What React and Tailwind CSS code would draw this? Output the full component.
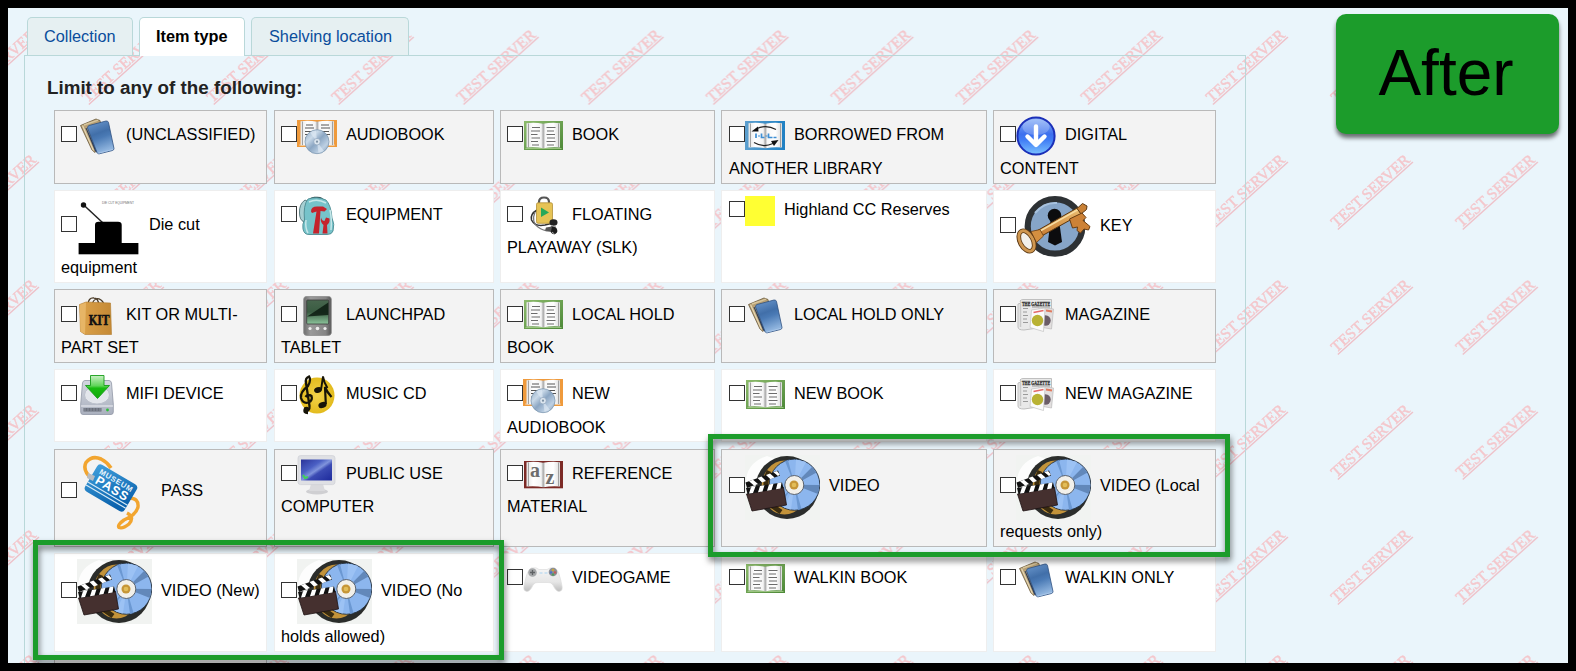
import React from "react";

const Svg = ({ w = 40, h = 40, className = "mt-1", children }) => (
  <svg width={w} height={h} viewBox={`0 0 ${w} ${h}`} className={`shrink-0 ${className}`} aria-hidden="true">
    {children}
  </svg>
);

const Defs = () => (
  <svg width="0" height="0" className="absolute">
    <defs>
      <linearGradient id="blueBook" x1="0" y1="0" x2="0.3" y2="1">
        <stop offset="0" stopColor="#6f9bd0" />
        <stop offset="0.45" stopColor="#416fa9" />
        <stop offset="0.6" stopColor="#4a7ab5" />
        <stop offset="1" stopColor="#8fb4de" />
      </linearGradient>
      <linearGradient id="page" x1="0" y1="0" x2="1" y2="0">
        <stop offset="0" stopColor="#e4e4e4" />
        <stop offset="0.2" stopColor="#ffffff" />
        <stop offset="0.44" stopColor="#f4f4f4" />
        <stop offset="0.5" stopColor="#a8a8a8" />
        <stop offset="0.56" stopColor="#f8f8f8" />
        <stop offset="0.8" stopColor="#ffffff" />
        <stop offset="1" stopColor="#dcdcdc" />
      </linearGradient>
      <linearGradient id="disc" x1="0" y1="0" x2="1" y2="1">
        <stop offset="0" stopColor="#8fa9c4" />
        <stop offset="0.3" stopColor="#c9d9e8" />
        <stop offset="0.5" stopColor="#8ba6c3" />
        <stop offset="0.75" stopColor="#bdd0e3" />
        <stop offset="1" stopColor="#7c96b2" />
      </linearGradient>
      <linearGradient id="orb" x1="0" y1="0" x2="0" y2="1">
        <stop offset="0" stopColor="#8fb6f7" />
        <stop offset="0.45" stopColor="#3d6fee" />
        <stop offset="0.6" stopColor="#3f7bf5" />
        <stop offset="1" stopColor="#7cc4ff" />
      </linearGradient>
      <linearGradient id="greenFrame" x1="0" y1="0" x2="1" y2="1">
        <stop offset="0" stopColor="#8dbb6c" />
        <stop offset="1" stopColor="#4c8837" />
      </linearGradient>
      <linearGradient id="blueFrame" x1="0" y1="0" x2="1" y2="0">
        <stop offset="0" stopColor="#5d9fce" />
        <stop offset="1" stopColor="#1f80c3" />
      </linearGradient>
      <linearGradient id="bag" x1="0" y1="0" x2="1" y2="0">
        <stop offset="0" stopColor="#dca24a" />
        <stop offset="1" stopColor="#c58a35" />
      </linearGradient>
      <linearGradient id="pda" x1="0" y1="0" x2="1" y2="0">
        <stop offset="0" stopColor="#6d6d6d" />
        <stop offset="0.25" stopColor="#9a9a9a" />
        <stop offset="0.8" stopColor="#858585" />
        <stop offset="1" stopColor="#555" />
      </linearGradient>
      <linearGradient id="pdaScreen" x1="0" y1="0" x2="0" y2="1">
        <stop offset="0" stopColor="#48664e" />
        <stop offset="0.5" stopColor="#3a5c42" />
        <stop offset="1" stopColor="#8cc49b" />
      </linearGradient>
      <linearGradient id="arrowGreen" x1="0" y1="0" x2="0" y2="1">
        <stop offset="0" stopColor="#c9f0c4" />
        <stop offset="0.45" stopColor="#5fd558" />
        <stop offset="0.55" stopColor="#18bc10" />
        <stop offset="1" stopColor="#12a80c" />
      </linearGradient>
      <linearGradient id="drive" x1="0" y1="0" x2="0" y2="1">
        <stop offset="0" stopColor="#d3d7e0" />
        <stop offset="1" stopColor="#aab0be" />
      </linearGradient>
      <linearGradient id="screenBlue" x1="0" y1="0" x2="1" y2="1">
        <stop offset="0" stopColor="#2a3398" />
        <stop offset="0.35" stopColor="#4a5fc4" />
        <stop offset="0.5" stopColor="#8094dc" />
        <stop offset="0.6" stopColor="#3c4cb4" />
        <stop offset="1" stopColor="#1d2a9c" />
      </linearGradient>
      <linearGradient id="passCard" x1="0" y1="0" x2="1" y2="0.6">
        <stop offset="0" stopColor="#41a0dc" />
        <stop offset="1" stopColor="#0a62ad" />
      </linearGradient>
      <linearGradient id="pad" x1="0" y1="0" x2="0" y2="1">
        <stop offset="0" stopColor="#f6f6f6" />
        <stop offset="0.6" stopColor="#e6e6e6" />
        <stop offset="1" stopColor="#bdbdbd" />
      </linearGradient>
      <linearGradient id="brass" x1="0" y1="0" x2="0" y2="1">
        <stop offset="0" stopColor="#eec276" />
        <stop offset="1" stopColor="#c4762c" />
      </linearGradient>
      <radialGradient id="gold">
        <stop offset="0" stopColor="#f2d34a" />
        <stop offset="1" stopColor="#e3bb1d" />
      </radialGradient>
    </defs>
  </svg>
);

const Pages = ({ y = 0 }) => (
  <g transform={`translate(0 ${y})`}>
    <path d="M3.500 7.200 Q12 6 20 7.800 Q29 6 37 7.200 V31.500 Q29 30.500 20.500 32.300 Q12 30.500 3.500 31.500Z" fill="url(#page)" />
    <path d="M5.500 7.500V31M35.500 7.500V31" stroke="#8f8f8f" strokeWidth="0.800" />
  </g>
);

const PageLines = () => (
  <path
    d="M9 11.500h8M8 15h9M8 18.500h6.500M8.500 22h8.500M8 25.500h7M9 29h7M23.500 11.500h9M24 15h7M23.500 18.500h8.500M24 22h8M23.500 25.500h9M24 29h7"
    stroke="#6b6b6b"
    strokeWidth="1.100"
    fill="none"
  />
);

const BookIcon = ({ className }) => (
  <Svg className={className}>
    <rect x="1" y="5" width="39" height="29" fill="url(#greenFrame)" />
    <rect x="2.500" y="32.200" width="36" height="0.800" fill="#a9cf8e" />
    <Pages />
    <PageLines />
  </Svg>
);

const AudiobookIcon = () => (
  <Svg>
    <rect x="0" y="4" width="40" height="27" fill="#ef9a3c" />
    <rect x="2" y="28.500" width="36" height="1.200" fill="#f6c083" />
    <Pages y={-2} />
    <path d="M9 9h7M8 12h9M8 15.500h7M8 18.500h5M24 9h8M24 12h9M24 15.500h8M28 18.500h5M8 22h3" stroke="#555" strokeWidth="1.100" />
    <circle cx="20" cy="25.700" r="12" fill="url(#disc)" stroke="#7690ab" strokeWidth="0.700" />
    <path d="M20 25.700 L13 16.500 A12 12 0 0 1 19 14.500Z M20 25.700 L27 35 A12 12 0 0 1 21.500 37Z" fill="#e3edf6" opacity="0.600" />
    <circle cx="20" cy="25.700" r="3.300" fill="#dbe5ee" stroke="#8fa5bb" strokeWidth="0.700" />
    <circle cx="20" cy="25.700" r="1.100" fill="#7d90a4" />
  </Svg>
);

const LoanIcon = () => (
  <Svg>
    <rect x="0" y="5" width="40" height="29" fill="url(#blueFrame)" />
    <Pages />
    <path d="M31 13.500 Q21 8 11 13" stroke="#222" strokeWidth="1.200" fill="none" />
    <path d="M6.500 15.500 L13 10.500 L13.500 15.500Z" fill="#111" />
    <path d="M9 26.500 Q18 32 28 27.500" stroke="#222" strokeWidth="1.200" fill="none" />
    <path d="M33.500 24 L26 25 L29 30Z" fill="#111" />
    <path d="M11 17.500v4.500M16.500 17.500v4h3M23.500 17.500v4h4M28.500 21.500h3" stroke="#3f8fd4" strokeWidth="1.700" fill="none" />
    <path d="M13 20h2M20.500 20h2" stroke="#3f8fd4" strokeWidth="1.200" />
  </Svg>
);

const BooksIcon = ({ className }) => (
  <Svg className={className}>
    <path d="M3.500 9.500 L19 3 L23 4.500 L27 25 L18 36.500 L15 34Z" fill="#b79f74" stroke="#6b5a3c" strokeWidth="0.800" />
    <path d="M5.500 9.500 L16.500 34.500" stroke="#e6d8b5" strokeWidth="1.200" />
    <path d="M7 9 L21 4.200" stroke="#d8c69d" strokeWidth="1.400" />
    <path d="M9.500 12 L21 37.500 L18 35 L8.500 12Z" fill="#2c3c58" />
    <path d="M12 9.500 L29 5 Q31 4.700 31.500 6.500 L37 32.500 Q37 34 35.500 34.500 L21.500 38 L20 36.500 L10.500 12 Q10.500 10 12 9.500Z" fill="url(#blueBook)" stroke="#2f5080" strokeWidth="0.800" />
    <path d="M21.500 37.200 L36 33.300" stroke="#a9c6e8" strokeWidth="1" />
  </Svg>
);

const DownloadIcon = () => (
  <Svg>
    <circle cx="20" cy="20" r="18.600" fill="url(#orb)" stroke="#1b2fb8" strokeWidth="2" />
    <ellipse cx="20" cy="11" rx="13.500" ry="8" fill="#fff" opacity="0.220" />
    <path d="M20 10.500 V27 M11.500 20.500 L20 29 L28.500 20.500" stroke="#fff" strokeWidth="4.400" fill="none" strokeLinecap="round" strokeLinejoin="round" />
  </Svg>
);

const DieCutIcon = () => (
  <Svg w={63} h={62}>
    <text x="25" y="9" fontSize="3.300" textLength="32" fill="#777" fontFamily="Liberation Sans, sans-serif">DIE CUT EQUIPMENT</text>
    <path d="M6.700 10 L26 28" stroke="#222" strokeWidth="1.500" />
    <circle cx="6.500" cy="10" r="2.700" fill="#111" />
    <path d="M18 49 V30 Q18 26.700 21.500 26.700 H41 Q44.700 26.700 44.700 30 V49Z" fill="#000" />
    <rect x="1.600" y="48" width="59.800" height="11.300" fill="#000" />
  </Svg>
);

const BackpackIcon = () => (
  <Svg>
    <path d="M11 7 Q13 0.500 19 1.500 Q26 1 27 6" fill="none" stroke="#31494d" strokeWidth="1.300" />
    <path d="M8 4 Q2 8 2.500 17 Q2.500 24 7 26 L12 6Z" fill="#a6cfd2" stroke="#4f7175" strokeWidth="0.900" />
    <path d="M11 3 Q20 0 29 4 Q34 9 35 22 Q38 28 36 35 Q35 38.500 30 38.500 H12 Q7 38.500 6 33 Q5 28 7.500 24 Q6 9 11 3Z" fill="#76c3ca" stroke="#4d8b92" strokeWidth="0.900" />
    <path d="M12 6 Q20 2 29 7 M9 24 Q8 32 11 37 M33 14 Q35 22 34 34" stroke="#c6e7e9" strokeWidth="1.500" fill="none" />
    <path d="M14 15.500 Q14 10.500 20 10.500 H26 L30 13 L27.500 15.500 L23.500 15 L22 37.500 H16 L19.500 15.500 L15 17Z" fill="#c4232c" />
    <path d="M24 21.500 Q25 25 27.500 25 L29 21.500 L32.500 22.500 Q33 27 30 29 L30.500 37.500 H25.500 L26.500 29 Q23 26 24 21.500Z" fill="#c4232c" />
  </Svg>
);

const PlayawayIcon = () => (
  <Svg>
    <path d="M16 9 V6 Q16 1.500 21 1.500 Q26 1.500 26 6 V9" fill="none" stroke="#555" strokeWidth="2.200" />
    <path d="M14 14 Q7 18 8.500 24 Q12 31 22 29 L30 27" fill="none" stroke="#333" strokeWidth="1.500" />
    <path d="M12 16 Q8 26 15 31 Q20 35 27 35" fill="none" stroke="#777" strokeWidth="1.300" />
    <rect x="13.500" y="6.800" width="16" height="20.500" rx="1.500" fill="#e6c355" stroke="#b3913a" strokeWidth="0.800" />
    <path d="M18 11.500 L26 16.500 L18 21Z" fill="#27a85a" />
    <ellipse cx="30.500" cy="26.500" rx="4" ry="3.200" fill="#222" />
    <ellipse cx="30.500" cy="34" rx="3.500" ry="4.200" fill="#1c1c1c" transform="rotate(-30 30.500 34)" />
    <path d="M23 31.500 L29 30.500 L28 35.500 L22 34.500Z" fill="#555" />
    <path d="M28 29.500 L33 31 M29 36 L31.500 38" stroke="#aaa" strokeWidth="1" />
  </Svg>
);

const YellowIcon = () => <span className="mt-1 size-[30px] shrink-0 bg-[#ffff33]" />;

const KeyIcon = () => (
  <Svg w={75} h={61} className="mt-[3px]">
    <circle cx="39" cy="30.400" r="27.300" fill="#86a5c8" stroke="#2d3134" strokeWidth="6.200" />
    <path d="M19 17 Q28 6 41 7" stroke="#a7c2df" strokeWidth="2" fill="none" />
    <circle cx="38.500" cy="19.500" r="6.800" fill="#0c0c0e" />
    <path d="M34.500 24 H43 L46 46 L39 49.500 L32 46Z" fill="#0c0c0e" />
    <path d="M18 36.500 L62 11.500 L65 18 L22 42 Z" fill="url(#brass)" stroke="#5a3712" strokeWidth="1" />
    <path d="M20.500 37 L62 13.600" stroke="#f7dda3" strokeWidth="1.500" />
    <path d="M61 12.500 L66.500 7.500 L71 10 L70.500 13.500 L65 18Z" fill="#c98136" stroke="#5a3712" strokeWidth="1" />
    <path d="M53.500 23 L66 17 L70 21.500 L67 24.500 L74 30.500 L72.500 34 L68 33 L64.500 37 L61 34.500 L61.500 31 L56.500 32Z" fill="#cd8237" stroke="#6b3e12" strokeWidth="1" />
    <ellipse cx="10.500" cy="45" rx="6.500" ry="11" transform="rotate(-28 10.500 45)" fill="#f2f0ea" stroke="#5a3712" strokeWidth="4.600" />
    <ellipse cx="10.500" cy="45" rx="6.500" ry="11" transform="rotate(-28 10.500 45)" fill="none" stroke="#cf9750" strokeWidth="2.900" />
    <path d="M15 35.500 L24 33.500 L27.500 40 L20.500 46.500 Z" fill="#d48f40" stroke="#6b3e12" strokeWidth="0.800" />
  </Svg>
);

const KitIcon = () => (
  <Svg>
    <path d="M11 9 Q11 1.500 17 2 Q21 2 22 9 M15 8 Q18 0 24 4 Q27 6 26.500 9" fill="none" stroke="#4a3b27" strokeWidth="1.300" />
    <path d="M2.500 8.500 L9 6 L33.500 7 L34.500 38.500 H8 L3.500 35.500Z" fill="url(#bag)" stroke="#b07a2e" strokeWidth="0.600" />
    <path d="M9 6.500 L8 38 L3.500 35.500 L2.700 8.700Z" fill="#e7b566" />
    <text x="11.500" y="29" fontSize="12" textLength="21" lengthAdjust="spacingAndGlyphs" fontWeight="700" fill="#111" stroke="#111" strokeWidth="0.400" fontFamily="DejaVu Serif, serif">KIT</text>
  </Svg>
);

const PdaIcon = () => (
  <Svg>
    <path d="M9 0.500 H32 Q34 0.500 34.300 3 V37 Q34 39.500 31 39.500 H10 Q7 39.500 6.700 37 V3 Q7 0.500 9 0.500Z" fill="url(#pda)" stroke="#8e8e8e" strokeWidth="0.800" />
    <rect x="9.700" y="4" width="22" height="24" rx="1" fill="url(#pdaScreen)" stroke="#3b3b3b" strokeWidth="0.800" />
    <path d="M10 20.500 L17 16 L31.300 6.500 V19 L10 20.500Z" fill="#0d1c12" opacity="0.850" />
    <circle cx="13" cy="32.500" r="1.600" fill="#eee" />
    <circle cx="20.500" cy="32.500" r="1.800" fill="#eee" />
    <circle cx="28" cy="32.500" r="1.600" fill="#eee" />
  </Svg>
);

const MagazineIcon = () => (
  <Svg>
    <path d="M4 5 Q5 3.500 7 3.500 H35.500 V30 L8 34 Q2 34 2 31 V8 L5 7Z" fill="#e9e9e9" stroke="#b9b9b9" strokeWidth="0.900" />
    <path d="M4.500 8 V31" stroke="#c8c8c8" strokeWidth="1.500" />
    <text transform="translate(6 9.500) scale(1 1.500)" fontSize="3.900" fontWeight="700" fill="#2f2f2f" stroke="#2f2f2f" strokeWidth="0.200" fontFamily="Liberation Serif, serif">THE GAZETTE</text>
    <path d="M7 12.500h5M7 16h4M7 19.500h5M7 23h4M7 26.500h5M16 11h18" stroke="#9a9a9a" strokeWidth="1" />
    <path d="M23 11 L37.500 13 L35.500 33 L24 31Z" fill="#e2dfdf" stroke="#bbb" strokeWidth="0.700" />
    <circle cx="29.500" cy="24.500" r="5.200" fill="#6b5d68" />
    <path d="M30 14.500 L36 15.500" stroke="#e07a5f" strokeWidth="2" />
    <path d="M15.500 14 L29 12 L27.500 35.500 L14 31.500Z" fill="#fbfbfb" stroke="#c2c2c2" strokeWidth="0.700" />
    <path d="M17.500 16.500 L27.500 14.500" stroke="#e36a6a" strokeWidth="1.700" />
    <circle cx="21.500" cy="24.500" r="5.700" fill="#b9b233" />
  </Svg>
);

const DriveIcon = () => (
  <Svg>
    <path d="M8 5.500 H32 Q34 5.500 34.500 8 L36.300 29 V37 Q36.300 39.500 34 39.500 H6 Q3.700 39.500 3.700 37 V29 L5.500 8 Q6 5.500 8 5.500Z" fill="url(#drive)" stroke="#9197a6" strokeWidth="0.800" />
    <ellipse cx="20" cy="20" rx="12.500" ry="9" fill="#e3e6ec" stroke="#bcc1cc" />
    <path d="M4 31 H36" stroke="#eef0f4" strokeWidth="1" />
    <rect x="6.500" y="33" width="18" height="3.500" fill="#6b707b" />
    <path d="M8 33v3.500M11 33v3.500M14 33v3.500M17 33v3.500M20 33v3.500M23 33v3.500" stroke="#8b90a0" strokeWidth="1" />
    <circle cx="30.500" cy="35" r="1.400" fill="#2fbf3a" />
    <path d="M13.500 0.500 H27 V10.500 H32.500 L20.500 23.500 L8.500 10.500 H13.500Z" fill="url(#arrowGreen)" stroke="#159c17" strokeWidth="0.900" />
  </Svg>
);

const MusicIcon = () => (
  <Svg>
    <ellipse cx="20" cy="20.500" rx="17.500" ry="18" fill="url(#gold)" />
    <path d="M11 38 Q6 38 8 34 Q13 37 12.500 31 L9 8 Q8 3 12 1.500 Q14.500 5 11 11 Q3 17 4 23 Q6 29 11.500 27.500 Q16 25.500 14.500 21 Q11 18.500 8.500 22" fill="none" stroke="#171408" strokeWidth="2.300" />
    <circle cx="9.500" cy="34.500" r="2.800" fill="#171408" />
    <ellipse cx="21" cy="15" rx="4" ry="2.800" fill="#171408" transform="rotate(-20 21 15)" />
    <path d="M24 15 L26 1.500 Q27 8 30.500 13" stroke="#171408" strokeWidth="1.900" fill="none" />
    <ellipse cx="25.500" cy="30" rx="4.200" ry="3" fill="#171408" transform="rotate(-20 25.500 30)" />
    <path d="M28.800 29 L28 12 Q30 17 34.500 22" stroke="#171408" strokeWidth="2.200" fill="none" />
  </Svg>
);

const PassIcon = () => (
  <Svg w={75} h={75}>
    <path d="M15 24 Q5 15 9 7.500 Q15 0 24 4 Q30 7 34 13" fill="none" stroke="#f2a52f" strokeWidth="3.600" />
    <path d="M52 43 Q62 43 61 52 Q59 60 47 65 Q40 70 42 72.500 Q46 74 52 69 Q58 62 50 58" fill="none" stroke="#f2a52f" strokeWidth="3.400" />
    <g transform="translate(22 8) rotate(30.500)">
      <rect x="0" y="0" width="46" height="31" rx="4" fill="url(#passCard)" />
      <path d="M0 22h46M0 25.500h46" stroke="#d7eaf6" strokeWidth="1.200" />
      <text x="5" y="9" fontSize="7.500" textLength="37" fontWeight="700" fill="#eaf6fd" fontFamily="Liberation Sans, sans-serif">MUSEUM</text>
      <text x="6" y="19.500" fontSize="12.500" textLength="36" fontWeight="700" fill="#fff" fontFamily="Liberation Sans, sans-serif">PASS</text>
    </g>
    <path d="M11 18 L18 21 L16 26 L10 23Z" fill="#b7bcc2" />
  </Svg>
);

const MonitorIcon = () => (
  <Svg>
    <ellipse cx="20" cy="36.500" rx="11" ry="3" fill="#cfcfd2" />
    <path d="M14 29 H26 L28 36 H12Z" fill="#dadadd" />
    <rect x="1" y="0.600" width="37" height="29" rx="2.500" fill="#dfe0e4" stroke="#cfd0d5" strokeWidth="0.700" />
    <rect x="4" y="4.500" width="31" height="21" fill="url(#screenBlue)" />
    <path d="M6 20 L8 23 L11 22" stroke="#3fd25a" strokeWidth="2.200" fill="none" />
  </Svg>
);

const ReferenceIcon = () => (
  <Svg>
    <rect x="1" y="6" width="39" height="27.300" fill="#7c2a26" />
    <Pages />
    <text x="7" y="21.500" fontSize="20" fontWeight="700" fill="#6d6d6d" fontFamily="Liberation Serif, serif">a</text>
    <text x="22.500" y="29.300" fontSize="20" fontWeight="700" fill="#6d6d6d" fontFamily="Liberation Serif, serif">z</text>
  </Svg>
);

const VideoIcon = ({ className }) => (
  <Svg w={75} h={65} className={className}>
    <rect width="75" height="65" fill="#f1f3f1" />
    <path d="M1 28 Q1 8 22 1 L30 4 L14 24Z" fill="#fdfdfd" />
    <ellipse cx="42" cy="32.500" rx="31.500" ry="31.500" fill="#2b2d2b" />
    <ellipse cx="39.500" cy="32.500" rx="23" ry="27" fill="#c3933a" />
    <path d="M24 16 Q17 30 26 50 L36 57" stroke="#3a2c10" strokeWidth="5" fill="none" />
    <ellipse cx="49.500" cy="29.700" rx="25.300" ry="25.600" fill="#8cb6ee" stroke="#25313f" strokeWidth="0.900" />
    <path d="M49.500 29.700 L67 12 L71.500 17.500Z M49.500 29.700 L74.500 30 L73 39Z" fill="#6288ba" />
    <path d="M49.500 29.700 L40 6 L43 5Z M49.500 29.700 L56.500 54 L53 55Z M49.500 29.700 L35 49.500 L32.500 47.500Z" fill="#6b98d2" />
    <path d="M49.500 29.700 L51 4.500 L61 7Z M49.500 29.700 L46 54.500 L39 52.500Z" fill="#9cc2f4" />
    <circle cx="49.300" cy="30" r="9.500" fill="#f2f0ea" stroke="#5c6470" strokeWidth="1" />
    <circle cx="49" cy="30" r="4.500" fill="#c69638" />
    <circle cx="49" cy="30" r="2.300" fill="#e2bd58" />
    <path d="M1.500 39 L38.500 32.500 L41.500 50 L7 56Z" fill="#45302f" stroke="#1d1213" strokeWidth="0.800" />
    <path d="M1 33 L37 27.500 L38.500 33 L2.500 39Z" fill="#111" />
    <path d="M6 32.300 L10.500 31.500 L8 38 L4 38.600Z M15 31 L19.500 30.200 L17.500 36.400 L13 37.200Z M24 29.500 L28.500 28.800 L26.500 35 L22 35.700Z M32.500 28.200 L36.500 27.600 L35.500 33.500 L31 34.200Z" fill="#fff" />
    <path d="M0.500 27.500 L33 15.500 L35 20.500 L2 33Z" fill="#111" />
    <path d="M4 26.200 L8 24.700 L13 29 L9 30.500Z M12.500 23 L16.500 21.500 L21 26 L17 27.500Z M21 20 L25 18.500 L29.500 22.600 L25.500 24.200Z M28.500 17.200 L32 15.900 L34.800 19.500 L33 21Z" fill="#fff" />
  </Svg>
);

const GamepadIcon = () => (
  <Svg>
    <path d="M8 9 Q14 8 16 10.500 H24 Q27 8 32 9 Q36 11 39 27 Q40 32 36 32.500 Q33 32.500 30 26 Q28 23 25 23.500 H15 Q12 23 10 26 Q7 32.500 4 32.500 Q0 32 1 27 Q4 11 8 9Z" fill="url(#pad)" stroke="#dcdcdc" strokeWidth="0.700" />
    <circle cx="9.500" cy="13.500" r="4.300" fill="#a6a8aa" />
    <path d="M9.500 11v5M7 13.500h5" stroke="#5f6264" strokeWidth="1.300" />
    <circle cx="30" cy="13" r="4.300" fill="#8e9096" />
    <circle cx="30" cy="11" r="1.200" fill="#c9a63a" />
    <circle cx="32" cy="13.500" r="1.200" fill="#c25a5a" />
    <circle cx="28" cy="13.500" r="1.200" fill="#4d72c9" />
    <circle cx="30" cy="15.500" r="1.200" fill="#4c9b5c" />
    <path d="M16.500 14h3M21.500 14h3" stroke="#a9d3f2" strokeWidth="1.200" />
  </Svg>
);

const L46 = "h-[46px]";
const rows = [
  {
    height: "h-[74px]",
    shaded: true,
    items: [
      { icon: <BooksIcon />, line: L46, text: "(UNCLASSIFIED)" },
      { icon: <AudiobookIcon />, line: L46, text: "AUDIOBOOK" },
      { icon: <BookIcon />, line: L46, text: "BOOK" },
      { icon: <LoanIcon />, line: L46, text: "BORROWED FROM", rest: "ANOTHER LIBRARY", pull: "-mt-px" },
      { icon: <DownloadIcon />, line: L46, text: "DIGITAL", rest: "CONTENT", pull: "-mt-px" },
    ],
  },
  {
    height: "h-[93px]",
    items: [
      { icon: <DieCutIcon />, line: "h-[66px]", text: "Die cut", rest: "equipment", pull: "-mt-0.5" },
      { icon: <BackpackIcon />, line: L46, text: "EQUIPMENT" },
      { icon: <PlayawayIcon />, line: L46, text: "FLOATING", rest: "PLAYAWAY (SLK)", pull: "-mt-0.5" },
      { icon: <YellowIcon />, line: "h-[36px]", text: "Highland CC Reserves" },
      { icon: <KeyIcon />, line: "h-[68px]", text: "KEY" },
    ],
  },
  {
    height: "h-[74px]",
    shaded: true,
    items: [
      { icon: <KitIcon />, line: "h-[48px]", text: "KIT OR MULTI-", rest: "PART SET", pull: "-mt-[3px]" },
      { icon: <PdaIcon />, line: "h-[48px]", text: "LAUNCHPAD", rest: "TABLET", pull: "-mt-[3px]" },
      { icon: <BookIcon className="mt-0.5" />, line: "h-[48px]", text: "LOCAL HOLD", rest: "BOOK", pull: "-mt-[3px]" },
      { icon: <BooksIcon className="mt-0.5" />, line: "h-[48px]", text: "LOCAL HOLD ONLY" },
      { icon: <MagazineIcon />, line: "h-[48px]", text: "MAGAZINE" },
    ],
  },
  {
    height: "mb-px h-[73px]",
    items: [
      { icon: <DriveIcon />, line: L46, text: "MIFI DEVICE" },
      { icon: <MusicIcon />, line: L46, text: "MUSIC CD" },
      { icon: <AudiobookIcon />, line: L46, text: "NEW", rest: "AUDIOBOOK", pull: "-mt-px" },
      { icon: <BookIcon />, line: L46, text: "NEW BOOK" },
      { icon: <MagazineIcon />, line: L46, text: "NEW MAGAZINE" },
    ],
  },
  {
    height: "h-[98px]",
    shaded: true,
    items: [
      { icon: <PassIcon />, line: "h-[80px]", text: "PASS" },
      { icon: <MonitorIcon />, line: L46, text: "PUBLIC USE", rest: "COMPUTER", pull: "-mt-0.5" },
      { icon: <ReferenceIcon />, line: L46, text: "REFERENCE", rest: "MATERIAL", pull: "-mt-0.5" },
      { icon: <VideoIcon className="mt-[5px]" />, line: "h-[70px]", text: "VIDEO" },
      { icon: <VideoIcon className="mt-[5px]" />, line: "h-[70px]", text: "VIDEO (Local", rest: "requests only)", pull: "-mt-px" },
    ],
  },
  {
    height: "mb-px h-[99px]",
    items: [
      { icon: <VideoIcon className="mt-[3px]" />, line: "h-[72px]", text: "VIDEO (New)" },
      { icon: <VideoIcon className="mt-[3px]" />, line: "h-[72px]", text: "VIDEO (No", rest: "holds allowed)", pull: "-mt-0.5" },
      { icon: <GamepadIcon />, line: L46, text: "VIDEOGAME" },
      { icon: <BookIcon />, line: L46, text: "WALKIN BOOK" },
      { icon: <BooksIcon />, line: L46, text: "WALKIN ONLY" },
    ],
  },
];

const columnClass = ["mr-px pl-1.5", "pl-1.5", "pl-1.5", "pl-[7px]", "pl-1.5"];

const Cell = ({ item, shaded, column }) => (
  <div
    className={`whitespace-nowrap border ${columnClass[column]} ${
      shaded ? "border-[#b9b9b9] bg-[#f3f3f3]" : "border-[#eeeeee] bg-white"
    }`}
  >
    <label className={`flex items-center ${item.line}`}>
      <input type="checkbox" className="size-4 shrink-0 appearance-none border-[1.500px] border-[#333] bg-white" />
      {item.icon}
      <span className="ml-[9px]">{item.text}</span>
    </label>
    {item.rest && <div className={item.pull}>{item.rest}</div>}
  </div>
);

const Watermark = () => (
  <svg className="absolute inset-0 h-full w-full" aria-hidden="true">
    <defs>
      <pattern id="wm" x="72" y="15" width="124.900" height="125" patternUnits="userSpaceOnUse">
        <g transform="translate(7.500 80) rotate(-42)">
          <text x="0" y="0" fontSize="15.500" textLength="100" fill="#f4c6cb" stroke="#f4c6cb" strokeWidth="0.450" fontFamily="Liberation Serif, serif">
            TEST SERVER
          </text>
          <path d="M0 2H101" stroke="#eebfc7" strokeWidth="1.400" />
        </g>
      </pattern>
    </defs>
    <rect width="100%" height="100%" fill="url(#wm)" />
  </svg>
);

const Tab = ({ active, className, children }) => (
  <button
    className={`relative flex items-start rounded-t-[5px] border border-b-0 border-[#b9d8d9] pt-[6px] leading-6 ${
      active ? "h-[39px] bg-white font-bold text-black" : "h-[38px] bg-[#e6f0f2] text-[#0a4d9c]"
    } ${className}`}
  >
    {children}
  </button>
);

export default function App() {
  return (
    <div className="h-[671px] w-[1576px] overflow-hidden bg-black px-2 pt-2 pb-2 font-['Liberation_Sans',Arial,sans-serif] text-[16.300px] leading-6 text-black">
      <Defs />
      <div className="relative h-[655px] overflow-hidden bg-[#eaf5fb]">
        <Watermark />
        <div className="relative flex h-[47px] items-start gap-1.5 pt-[9px] pl-[19px]">
          <Tab className="w-[106px] pl-4">Collection</Tab>
          <Tab active className="z-10 w-[106px] pl-4">Item type</Tab>
          <Tab className="w-[158px] pl-[17px]">Shelving location</Tab>
        </div>
        <main className="relative ml-4 h-[640px] w-[1222px] border border-[#b9d8d9]">
          <h1 className="ml-[22px] mt-[18px] h-[36px] text-[18.800px] font-bold leading-7 text-[#222]">
            Limit to any of the following:
          </h1>
          <div className="ml-[29px] flex flex-col gap-1.5">
            {rows.map((row, r) => (
              <div key={r} className={`grid grid-cols-[214px_220px_215px_266px_223px] gap-x-1.5 ${row.height}`}>
                {row.items.map((item, c) => (
                  <Cell key={c} item={item} shaded={row.shaded} column={c} />
                ))}
              </div>
            ))}
            <div className="h-[74px] w-[213px] border border-[#b9b9b9] bg-[#f3f3f3]" />
          </div>
        </main>
        <div className="absolute left-[700px] top-[426px] h-[123px] w-[522px] border-[5px] border-[#1c9c2b] drop-shadow-[1px_4px_3px_rgba(0,0,0,0.550)]" />
        <div className="absolute left-[25px] top-[532px] h-[120px] w-[471px] border-[5px] border-[#1c9c2b] drop-shadow-[1px_4px_3px_rgba(0,0,0,0.550)]" />
        <div className="absolute left-[1328px] top-[6px] flex h-[120px] w-[223px] items-center justify-center rounded-[10px] bg-[#1c9c2b] text-[64px] leading-[120px] shadow-[0_4px_4px_rgba(0,0,0,0.550)]">
          <span className="-mt-[2px] mr-[3px]">After</span>
        </div>
      </div>
    </div>
  );
}
